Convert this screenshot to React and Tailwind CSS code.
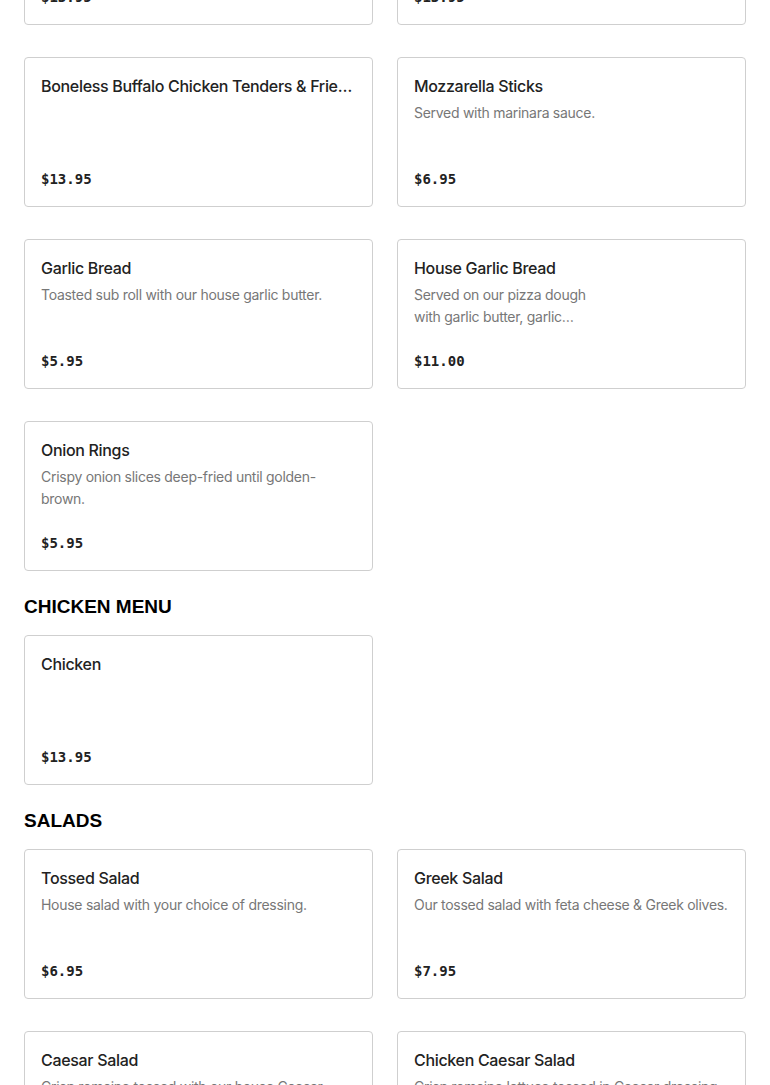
const sections = [
  {
    title: null,
    items: [
      { name: 'Buffalo Wings', desc: 'Served with celery and blue cheese.', price: '$13.95' },
      { name: 'Chicken Fingers & Fries', desc: 'Served with honey mustard.', price: '$13.95' },
      { name: 'Boneless Buffalo Chicken Tenders & Fries Basket', desc: '', price: '$13.95' },
      { name: 'Mozzarella Sticks', desc: 'Served with marinara sauce.', price: '$6.95' },
      { name: 'Garlic Bread', desc: 'Toasted sub roll with our house garlic butter.', price: '$5.95' },
      { name: 'House Garlic Bread', desc: 'Served on our pizza dough\nwith garlic butter, garlic\nand mozzarella cheese.', price: '$11.00' },
      { name: 'Onion Rings', desc: 'Crispy onion slices deep-fried until golden-brown.', price: '$5.95' },
    ],
  },
  {
    title: 'Chicken Menu',
    items: [{ name: 'Chicken', desc: '', price: '$13.95' }],
  },
  {
    title: 'Salads',
    items: [
      { name: 'Tossed Salad', desc: 'House salad with your choice of dressing.', price: '$6.95' },
      { name: 'Greek Salad', desc: 'Our tossed salad with feta cheese & Greek olives.', price: '$7.95' },
      { name: 'Caesar Salad', desc: 'Crisp romaine tossed with our house Caesar dressing, croutons and parmesan.', price: '$7.95' },
      { name: 'Chicken Caesar Salad', desc: 'Crisp romaine lettuce tossed in Caesar dressing with grilled chicken.', price: '$10.95' },
    ],
  },
]

function MenuCard({ item }) {
  return (
    <div className="flex h-[150px] flex-col rounded border border-[#cfcfcf] bg-white p-4">
      <p className="truncate text-[16px] leading-6 font-medium tracking-[-0.02em] text-[#222]">{item.name}</p>
      {item.desc && (
        <p className="mt-1 line-clamp-2 whitespace-pre-line text-[14px] leading-[22px] tracking-[-0.02em] text-[#777]">
          {item.desc}
        </p>
      )}
      <p className="mt-auto font-['DejaVu_Sans_Mono',monospace] text-[14px] leading-[22px] font-bold text-[#222]">
        {item.price}
      </p>
    </div>
  )
}

export default function App() {
  return (
    <div className="min-h-screen overflow-hidden bg-white font-['Inter',sans-serif]">
      <div className="mt-[-125px] px-6 pb-10">
        {sections.map((section, i) => (
          <div key={i}>
            {section.title && (
              <h2 className="mt-6 mb-4 font-['Liberation_Sans',Arial,sans-serif] text-[19px] leading-6 font-extrabold uppercase text-black">
                {section.title}
              </h2>
            )}
            <div className="grid grid-cols-2 gap-x-6 gap-y-8">
              {section.items.map((item) => (
                <MenuCard key={item.name} item={item} />
              ))}
            </div>
          </div>
        ))}
      </div>
    </div>
  )
}
